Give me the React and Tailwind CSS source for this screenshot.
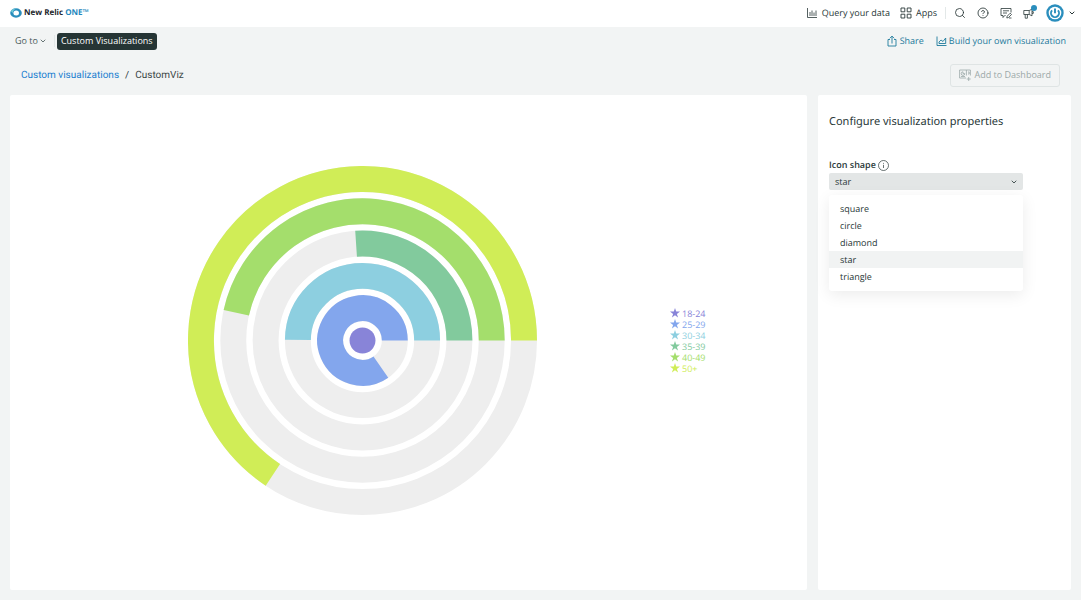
import React, { useState } from 'react';
import { ChevronDown, CircleHelp, Search } from 'lucide-react';

const SHAPES = ['square', 'circle', 'diamond', 'star', 'triangle'];

// Each ring starts at 3 o'clock and runs counterclockwise by `angle` degrees
const RINGS = [
  { name: '18-24', color: '#8884d8', angle: 360 },
  { name: '25-29', color: '#83a6ed', angle: 304.7 },
  { name: '30-34', color: '#8dcfe0', angle: 179.5 },
  { name: '35-39', color: '#82ca9d', angle: 93.8 },
  { name: '40-49', color: '#a4de6c', angle: 167.6 },
  { name: '50+', color: '#d0ed57', angle: 236.3 },
];

const RING_STEP = 32.4;
const RING_WIDTH = 26;

const arcPath = (radius, angle) => {
  const rad = (angle * Math.PI) / 180;
  const x = radius * Math.cos(rad);
  const y = -radius * Math.sin(rad);
  return `M ${radius} 0 A ${radius} ${radius} 0 ${angle > 180 ? 1 : 0} 0 ${x} ${y}`;
};

const BarsIcon = () => (
  <svg className="w-3 h-3" viewBox="0 0 12 12" fill="none" stroke="currentColor" strokeWidth="0.8" aria-hidden="true">
    <path d="M1.5 1v9.5H11M4 5v4M6 3.5V9M8 5.5V9M10 3.5V9" />
  </svg>
);

const AppsIcon = () => (
  <svg className="w-3 h-3" viewBox="0 0 12 12" fill="none" stroke="currentColor" strokeWidth="0.9" aria-hidden="true">
    <path d="M1 1h3.8v3.8H1zM7.2 1H11v3.8H7.2zM1 7.2h3.8V11H1zM7.2 7.2H11V11H7.2z" />
  </svg>
);

const FeedbackIcon = () => (
  <svg className="w-3 h-3" viewBox="0 0 12 12" fill="none" stroke="currentColor" strokeWidth="0.8" aria-hidden="true">
    <path d="M5.5 8.5H4.7L3 10.5v-2H1v-7h10v4M3 3.8h6M3 6h4M6.8 11l.4-1.8 3-3 1.3 1.3-3 3zM9 11h2.5" />
  </svg>
);

const MegaphoneIcon = () => (
  <svg className="w-3 h-3" viewBox="0 0 12 12" fill="none" stroke="currentColor" strokeWidth="0.8" aria-hidden="true">
    <path d="M.8 3.5h5.4L9 2.2v6.6L6.2 7.5H.8zM2.2 7.5v3.7h2.2V7.5M6.2 3.5v4M9 4.7h1.3v1.7H9" />
  </svg>
);

const ShareIcon = () => (
  <svg className="w-[10px] h-3" viewBox="0 0 10 12" fill="none" stroke="currentColor" strokeWidth="0.9" aria-hidden="true">
    <path d="M3 4.5H1v6.5h8V4.5H7M5 8.5V1.2M2.8 3.3L5 1.1l2.2 2.2" />
  </svg>
);

const ChartIcon = () => (
  <svg className="w-3 h-3" viewBox="0 0 12 12" fill="none" stroke="currentColor" strokeWidth="0.9" aria-hidden="true">
    <path d="M1 1.5v9h9.5M3 8.5V7l2-2 2 1.5L9.7 3v5.5z" />
  </svg>
);

const DashboardIcon = () => (
  <svg className="w-3 h-3" viewBox="0 0 12 12" fill="none" stroke="currentColor" strokeWidth="0.8" aria-hidden="true">
    <path d="M7 9H.6V1h10.8v5.5M7.4 1v5.5M9 3h1.2v2H9M4 2.8a1.8 1.8 0 1 0 1.8 1.8H4zM2 7.5h4M9.7 8v4M7.7 10h4" />
  </svg>
);

const InfoIcon = () => (
  <svg className="w-[11px] h-[11px]" viewBox="0 0 11 11" fill="none" stroke="currentColor" strokeWidth="0.7" aria-hidden="true">
    <circle cx="5.5" cy="5.5" r="5" />
    <path d="M5.5 4.8v3.2M5.5 2.9v.9" />
  </svg>
);

const Logo = () => (
  <a href="#home" className="flex items-center gap-[2px] text-[8px] leading-3 font-bold text-[#1d252c]">
    <svg className="w-3 h-3" viewBox="0 0 12 12" aria-hidden="true">
      <ellipse cx="6" cy="6" rx="5.8" ry="4.7" fill="#2a8ebd" />
      <path d="M1 4.2C2.2 2 4.5 1.2 7 1.5 4.5 2 3 3.6 2.8 6z" fill="#70ccd8" />
      <ellipse cx="6.2" cy="6" rx="2.8" ry="2.5" fill="#fff" />
    </svg>
    <span>
      New Relic <span className="text-[#2487bd]">ONE™</span>
    </span>
  </a>
);

const Header = () => (
  <header className="flex items-center justify-between h-[27px] pl-[10px] pr-[5px] pb-[2px] bg-white">
    <Logo />
    <nav className="flex items-center">
      <a href="#query" className="flex items-center gap-1">
        <BarsIcon />
        Query your data
      </a>
      <a href="#apps" className="flex items-center gap-1 ml-[10px]">
        <AppsIcon />
        Apps
      </a>
      <div className="w-px h-3 ml-2 mr-2 bg-[#e3e8e8]" />
      <div className="flex items-center gap-[11px]">
        <button type="button" aria-label="Search">
          <Search className="w-3 h-3" strokeWidth={1.7} />
        </button>
        <button type="button" aria-label="Help">
          <CircleHelp className="w-3 h-3" strokeWidth={1.7} />
        </button>
        <button type="button" aria-label="Feedback">
          <FeedbackIcon />
        </button>
        <button type="button" aria-label="News" className="relative">
          <MegaphoneIcon />
          <span className="absolute -top-[2px] -right-[2px] w-[6px] h-[6px] rounded-full bg-[#2a8ebd]" />
        </button>
        <button type="button" aria-label="Account" className="flex items-center gap-1">
          <svg className="w-[18px] h-[18px]" viewBox="0 0 18 18" fill="none" aria-hidden="true">
            <circle cx="9" cy="9" r="8.7" fill="#2a8ebd" />
            <circle cx="9" cy="9" r="6.3" fill="#fff" />
            <path d="M6.1 6.4a4 4 0 1 0 5.8 0M9 4.6v4.6" stroke="#2a8ebd" strokeWidth="1.9" />
          </svg>
          <ChevronDown className="w-2 h-2" strokeWidth={3} />
        </button>
      </div>
    </nav>
  </header>
);

const SubHeader = () => (
  <div className="flex items-center justify-between h-7 pl-[15px] pr-[15px]">
    <div className="flex items-center">
      <button type="button" className="flex items-center gap-px text-[#4a5b5b]">
        Go to
        <ChevronDown className="w-2 h-2" strokeWidth={2.5} />
      </button>
      <div className="w-px h-3 ml-[7px] mr-[2px] bg-[#e3e8e8]" />
      <button type="button" className="h-[17px] px-1 rounded-[3px] bg-[#263535] text-white">
        Custom Visualizations
      </button>
    </div>
    <div className="flex items-center gap-3 text-[#1e7a9c]">
      <a href="#share" className="flex items-center gap-[3px]">
        <ShareIcon />
        Share
      </a>
      <a href="#build" className="flex items-center gap-px">
        <ChartIcon />
        Build your own visualization
      </a>
    </div>
  </div>
);

const TitleBar = () => (
  <div className="flex items-center justify-between h-10 pl-[21px] pr-[21px]">
    <nav className="flex gap-[6px] pt-px font-[Roboto,sans-serif] text-[10px]" aria-label="Breadcrumb">
      <a href="#visualizations" className="text-[#1b7fd0]">Custom visualizations</a>
      <span>/</span>
      <span className="text-[#3b4646]">CustomViz</span>
    </nav>
    <button
      type="button"
      disabled
      className="flex items-center gap-1 h-[23px] px-2 rounded-[3px] border border-[#dfe4e4] text-[#9ba8a8]"
    >
      <DashboardIcon />
      Add to Dashboard
    </button>
  </div>
);

const RadialChart = () => (
  <svg className="w-[349px] h-[349px]" viewBox="-175 -175 350 350" fill="none" role="img" aria-label="Radial bar chart">
    {RINGS.map((ring, index) => {
      const radius = index * RING_STEP;
      if (index === 0) {
        return <circle key={ring.name} r={RING_WIDTH / 2} fill={ring.color} />;
      }
      return (
        <g key={ring.name} strokeWidth={RING_WIDTH}>
          <circle r={radius} stroke="#eeeeee" />
          <path d={arcPath(radius, ring.angle)} stroke={ring.color} />
        </g>
      );
    })}
  </svg>
);

const Legend = () => (
  <ul className="w-[137px]">
    {RINGS.map((ring) => (
      <li key={ring.name} className="flex items-center gap-[2px] leading-[11px]" style={{ color: ring.color }}>
        <svg className="w-[10px] h-[10px]" viewBox="0 0 10 10" fill="currentColor" aria-hidden="true">
          <path d="M5 0l1.2 3.6H10L6.9 5.9 8.1 9.6 5 7.3 1.9 9.6l1.2-3.7L0 3.6h3.8z" />
        </svg>
        {ring.name}
      </li>
    ))}
  </ul>
);

const ConfigPanel = () => {
  const [shape, setShape] = useState('star');

  return (
    <aside className="w-[253px] shrink-0 px-[11px] pt-[18px] bg-white rounded-[2px]">
      <h2 className="font-['Noto_Sans',sans-serif] text-[11px] leading-[18px]">Configure visualization properties</h2>
      <div className="flex items-center gap-[2px] mt-7 h-3">
        <label htmlFor="icon-shape" className="font-semibold">Icon shape</label>
        <InfoIcon />
      </div>
      <div className="relative w-[194px] mt-[2px]">
        <select
          id="icon-shape"
          value={shape}
          onChange={(e) => setShape(e.target.value)}
          className="block w-full h-[17px] pl-[6px] appearance-none rounded-[2px] bg-[#e3e6e6]"
        >
          {SHAPES.map((item) => (
            <option key={item} value={item}>{item}</option>
          ))}
        </select>
        <ChevronDown className="absolute right-[5px] top-[5px] w-2 h-2 pointer-events-none" strokeWidth={2.5} />

        {/* Open menu */}
        <ul
          role="listbox"
          aria-label="Icon shape"
          className="absolute left-0 top-[22px] w-full pt-[5px] pb-[6px] rounded-[3px] bg-white shadow-[0_4px_16px_rgba(0,0,0,0.08)]"
        >
          {SHAPES.map((item) => (
            <li
              key={item}
              role="option"
              aria-selected={item === shape}
              onClick={() => setShape(item)}
              className={`h-[17px] px-[11px] leading-[17px] cursor-pointer ${item === shape ? 'bg-[#f1f3f3]' : ''}`}
            >
              {item}
            </li>
          ))}
        </ul>
      </div>
    </aside>
  );
};

const App = () => (
  <div className="min-h-screen flex flex-col bg-[#f2f4f4] font-['Open_Sans',sans-serif] text-[9px] leading-3 text-[#293838] [text-rendering:geometricPrecision]">
    <Header />
    <SubHeader />
    <TitleBar />
    <main className="flex-1 flex gap-[11px] px-[10px] pb-[10px]">
      <section className="flex-1 flex items-center pb-1 bg-white rounded-[2px]">
        <div className="flex-1 flex justify-center pl-[45px]">
          <RadialChart />
        </div>
        <Legend />
      </section>
      <ConfigPanel />
    </main>
  </div>
);

export default App;
